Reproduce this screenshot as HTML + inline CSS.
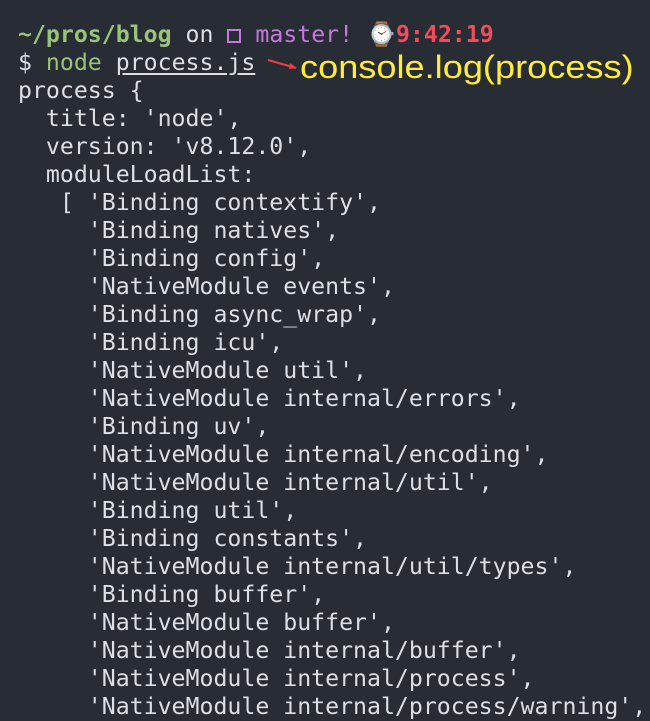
<!DOCTYPE html>
<html><head><style>
html,body{margin:0;padding:0;background:#282c34;width:650px;height:718px;overflow:hidden}
pre{margin:0;position:absolute;left:18px;top:21px;font-family:"DejaVu Sans Mono","Liberation Mono",monospace;font-size:23.2px;line-height:28px;color:#dcdfe4}
.g{color:#98c379}.p{color:#c678dd}.r{color:#ef4c5c}.b{font-weight:bold}
.u{text-decoration:underline;text-underline-offset:3px}
.ann{position:absolute;left:300px;top:48px;font-family:"Liberation Sans",sans-serif;font-size:32px;color:#ffeb3b;line-height:38px;transform:scaleX(1.13);transform-origin:0 0;white-space:nowrap}
.box{display:inline-block;width:14px;height:14px;border:2px solid #c678dd;box-sizing:border-box;vertical-align:-1px}
</style></head><body>
<pre><span class="g b">~/pros/blog</span> on <span class="box"></span> <span class="p">master!</span> <span style="color:#555">⌚</span><span class="r b">9:42:19</span>
$ <span class="g">node</span> <span class="u">process.js</span>
process {
  title: 'node',
  version: 'v8.12.0',
  moduleLoadList:
   [ 'Binding contextify',
     'Binding natives',
     'Binding config',
     'NativeModule events',
     'Binding async_wrap',
     'Binding icu',
     'NativeModule util',
     'NativeModule internal/errors',
     'Binding uv',
     'NativeModule internal/encoding',
     'NativeModule internal/util',
     'Binding util',
     'Binding constants',
     'NativeModule internal/util/types',
     'Binding buffer',
     'NativeModule buffer',
     'NativeModule internal/buffer',
     'NativeModule internal/process',
     'NativeModule internal/process/warning',</pre>
<svg style="position:absolute;left:266px;top:58px" width="34" height="14"><path d="M2 2 L30 10" stroke="#f03c3c" stroke-width="2"/><path d="M24 5 L31 10 L23 11Z" fill="#f03c3c"/></svg>
<div class="ann">console.log(process)</div>
</body></html>
